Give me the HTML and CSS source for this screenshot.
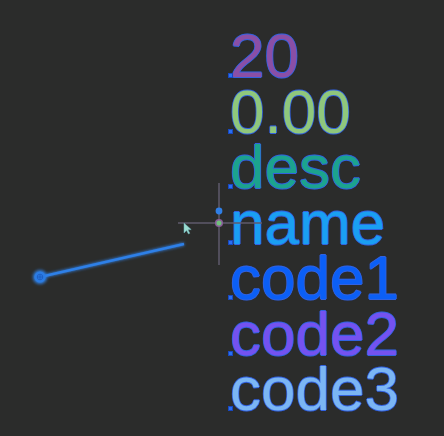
FILE: index.html
```html
<!DOCTYPE html>
<html>
<head>
<meta charset="utf-8">
<link rel="stylesheet" href="styles.css">
</head>
<body>
<div class="canvas">
  <div class="labels">
    <div class="label c-num"><span class="anchor"></span>20</div>
    <div class="label c-price"><span class="anchor"></span>0.00</div>
    <div class="label c-desc"><span class="anchor"></span>desc</div>
    <div class="label c-name"><span class="anchor"></span>name</div>
    <div class="label c-code1"><span class="anchor"></span>code1</div>
    <div class="label c-code2"><span class="anchor"></span>code2</div>
    <div class="label c-code3"><span class="anchor"></span>code3</div>
  </div>
  <svg class="overlay" width="444" height="436" viewBox="0 0 444 436">
    <defs>
      <filter id="glow" x="-50%" y="-50%" width="200%" height="200%">
        <feGaussianBlur stdDeviation="1.4"/>
      </filter>
    </defs>
    <line x1="178" y1="223" x2="262" y2="223" stroke="#5f5a6c" stroke-width="1.5"/>
    <line x1="219" y1="183" x2="219" y2="265" stroke="#5f5a6c" stroke-width="1.5"/>
    <circle cx="219" cy="211" r="3.4" fill="#2f7fe6"/>
    <circle cx="219" cy="223" r="3.3" fill="#6fc07a" stroke="#8a5a9a" stroke-width="1.5"/>
    <g filter="url(#glow)">
      <line x1="40" y1="277" x2="184" y2="244" stroke="#2f7ee0" stroke-width="3.2"/>
      <circle cx="40" cy="277" r="7" fill="#2f7ee0"/>
    </g>
    <line x1="40" y1="277" x2="184" y2="244" stroke="#2e80e8" stroke-width="2.4"/>
    <circle cx="40" cy="277" r="5.6" fill="#2b7ce4"/>
    <path d="M37 277 H43 M40 274.5 V279.5" stroke="#1c5cc0" stroke-width="0.9"/>
    <circle cx="40" cy="277" r="2.8" fill="none" stroke="#1c5cc0" stroke-width="0.8"/>
    <path d="M184 223 L184 233 L186.5 230.5 L188.5 234 L189.8 233.2 L188 229.8 L191.2 229.6 Z" fill="#9adcd0" stroke="#6ab0b8" stroke-width="0.5"/>
  </svg>
</div>
</body>
</html>
```
FILE: styles.css
```css
html, body {
  margin: 0;
  padding: 0;
  background: #2b2c2b;
}
.canvas {
  position: relative;
  width: 444px;
  height: 436px;
  overflow: hidden;
}
.labels {
  display: flex;
  flex-direction: column;
  padding: 28px 0 0 230px;
}
.label {
  position: relative;
  font-family: "Liberation Sans", Arial, sans-serif;
  font-size: 62px;
  line-height: 55.5px;
  height: 55.5px;
  white-space: nowrap;
  text-shadow:
    0.8px 0 0 #3262e0, -0.8px 0 0 #3262e0, 0 0.8px 0 #3262e0, 0 -0.8px 0 #3262e0,
    0 0 1.5px #2f5ad8;
}
.anchor {
  position: absolute;
  left: -2px;
  top: 45px;
  width: 3px;
  height: 3px;
  background: #2a6ff0;
  border: 1px solid #1848c0;
}
.c-num { color: #8a4fa6; }
.c-price { color: #8fc77c; }
.c-desc { color: #1ca38e; }
.c-name { color: #1a9ff2; }
.c-code1 { color: #0b5ff6; }
.c-code2 { color: #7452f0; }
.c-code3 { color: #7bb6f4; }
.overlay {
  position: absolute;
  left: 0;
  top: 0;
}
```
